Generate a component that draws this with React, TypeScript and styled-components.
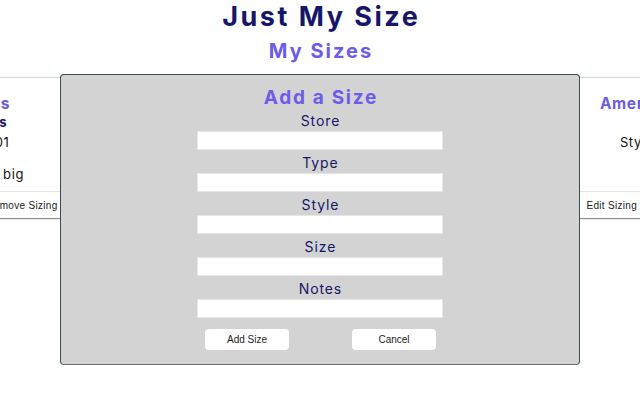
import React from 'react'
import styled, { createGlobalStyle } from 'styled-components'

const GlobalStyle = createGlobalStyle`
body {
  margin: 0;
  background: #fff;
  font-family: Inter, 'Noto Sans', sans-serif;
  overflow: hidden;
}
`

const Page = styled.div`
width: 100%;
height: 400px;
overflow: hidden;
`

const Title = styled.h1`
margin: 0;
padding: 2px 0 0 2.5px;
text-align: center;
font-size: 27px;
line-height: 30px;
font-weight: 700;
letter-spacing: 2.5px;
color: #16166a;
`

const Subtitle = styled.h2`
margin: 6px 0 0;
padding-left: 2px;
text-align: center;
font-size: 20px;
line-height: 26px;
font-weight: 700;
letter-spacing: 2px;
color: #6c5ce7;
`

const CardRow = styled.div`
display: flex;
justify-content: center;
gap: 59px;
margin-top: 13px;
`

const Card = styled.div`
flex: 0 0 170px;
height: 140px;
display: flex;
flex-direction: column;
border-top: 1px solid #d6d6d6;
box-shadow: 0 1px 1px rgba(0, 0, 0, 0.45);
text-align: center;
letter-spacing: 0.6px;
`

const CardBody = styled.div`
flex: 1;
padding-top: 16px;
`

const CardStore = styled.div`
font-size: 15.5px;
line-height: 20px;
font-weight: 700;
color: #6c5ce7;
`

const CardType = styled.div`
font-size: 13px;
line-height: 17px;
font-weight: 700;
color: #16166a;
margin-bottom: 3px;
`

const CardLine = styled.div`
font-size: 13px;
line-height: 16px;
color: #111;
`

const CardFooter = styled.div`
height: 26px;
display: flex;
justify-content: space-between;
align-items: center;
padding: 0 4px 0 8px;
border-top: 1px solid #e4e4e4;
`

const CardButton = styled.button`
border: none;
background: none;
padding: 0;
font-family: 'Liberation Sans', Arial, sans-serif;
font-size: 10px;
letter-spacing: 0.3px;
color: #222;
`

const Modal = styled.div`
position: fixed;
top: 74px;
left: 60px;
width: 520px;
height: 291px;
box-sizing: border-box;
background: #d3d3d3;
border: 1px solid #34504f;
border-bottom-color: #6b6b6b;
border-radius: 4px;
padding-top: 10px;
display: flex;
flex-direction: column;
align-items: center;
`

const ModalTitle = styled.h3`
margin: 0;
padding-left: 1.7px;
font-size: 19px;
line-height: 25px;
font-weight: 700;
letter-spacing: 1.7px;
color: #6c5ce7;
`

const Field = styled.label`
display: flex;
flex-direction: column;
align-items: center;
margin-top: ${p => (p.$first ? 0 : 2)}px;
`

const FieldName = styled.span`
padding-left: 0.9px;
font-size: 14px;
line-height: 21px;
letter-spacing: 0.9px;
color: #16166a;
`

const TextInput = styled.input`
width: 246px;
height: 19px;
box-sizing: border-box;
border: 1px solid #e6e6e6;
background: #fff;
padding: 0 4px;
outline: none;
`

const Actions = styled.div`
width: 246px;
box-sizing: border-box;
display: flex;
justify-content: space-between;
padding: 0 7px 0 8px;
margin-top: 11px;
`

const ActionButton = styled.button`
width: 84px;
height: 21px;
border: none;
border-radius: 4px;
background: #fff;
font-family: 'Liberation Sans', Arial, sans-serif;
font-size: 10px;
color: #222;
padding: 0;
`

const sizings = [
  { store: 'Dockers', type: 'Trousers', style: 'Style: 501', size: '32', notes: 'Note: runs big' },
  { store: 'Old Navy', type: 'Shirts', style: 'Style: Oxford', size: 'M', notes: 'Note: fits well' },
  { store: 'Nike', type: 'Shoes', style: 'Style: Air Max', size: '10', notes: 'Note: narrow' },
  { store: 'American Eagle', type: 'Jeans', style: 'Style: Skinny', size: '30', notes: 'Long' },
]

const fields = ['Store', 'Type', 'Style', 'Size', 'Notes']

export default function App() {
  return (
    <Page>
      <GlobalStyle />
      <Title>Just My Size</Title>
      <Subtitle>My Sizes</Subtitle>
      <CardRow>
        {sizings.map(s => (
          <Card key={s.store}>
            <CardBody>
              <CardStore>{s.store}</CardStore>
              <CardType>{s.type}</CardType>
              <CardLine>{s.style}</CardLine>
              <CardLine>{s.size}</CardLine>
              <CardLine>{s.notes}</CardLine>
            </CardBody>
            <CardFooter>
              <CardButton>Edit Sizing</CardButton>
              <CardButton>Remove Sizing</CardButton>
            </CardFooter>
          </Card>
        ))}
      </CardRow>
      <Modal>
        <ModalTitle>Add a Size</ModalTitle>
        {fields.map((f, i) => (
          <Field key={f} $first={i === 0}>
            <FieldName>{f}</FieldName>
            <TextInput type="text" />
          </Field>
        ))}
        <Actions>
          <ActionButton>Add Size</ActionButton>
          <ActionButton>Cancel</ActionButton>
        </Actions>
      </Modal>
    </Page>
  )
}
